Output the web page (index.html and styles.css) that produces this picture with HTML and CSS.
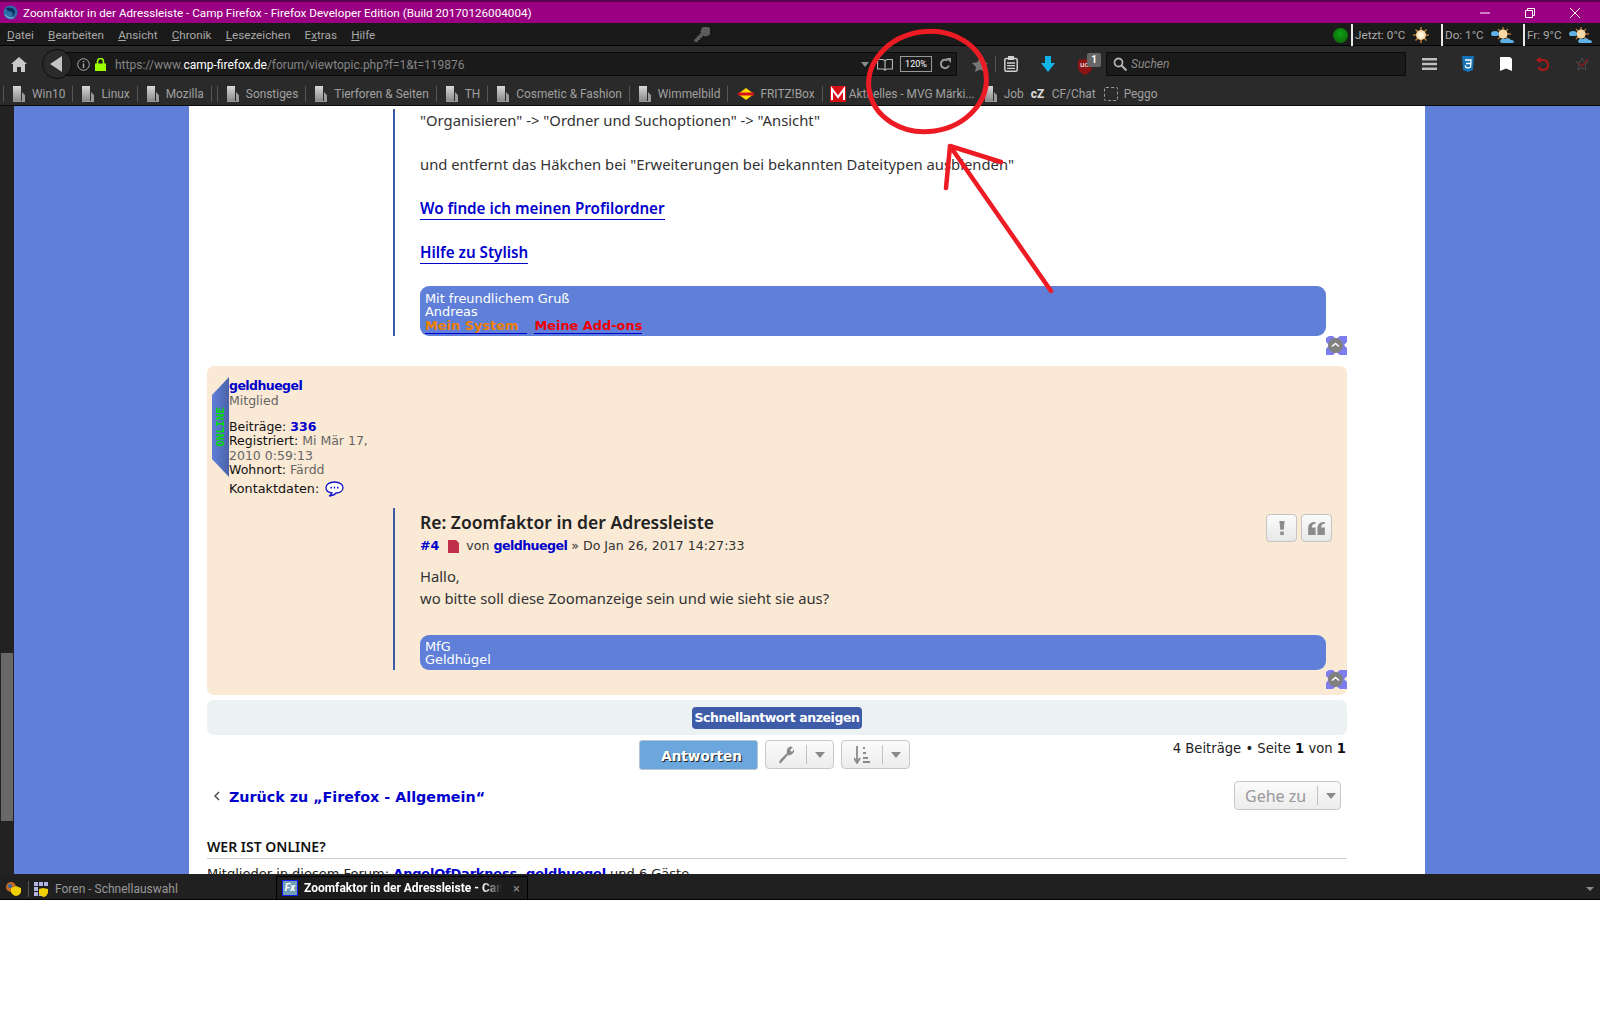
FILE: index.html
```html
<!DOCTYPE html>
<html lang="de">
<head>
<meta charset="utf-8">
<title>Zoomfaktor in der Adressleiste - Camp Firefox</title>
<link rel="stylesheet" href="styles.css">
</head>
<body>
<svg class="sprite" aria-hidden="true">
  <defs>
    <linearGradient id="docg" x1="0" y1="0" x2="0" y2="1"><stop offset="0" stop-color="#d8d8d8"/><stop offset="1" stop-color="#8a8a8a"/></linearGradient>
    <symbol id="doc" viewBox="0 0 12 16"><path d="M0 0H8V15H0Z" fill="url(#docg)"/><path d="M9 6L12 9V16H0V15H9Z" fill="#9a9a9a"/></symbol>
    <symbol id="sun" viewBox="0 0 16 16"><g stroke="#b07a3a" stroke-width="1.6"><path d="M8 0V16M0 8H16M2.5 2.5L13.5 13.5M13.5 2.5L2.5 13.5"/></g><circle cx="8" cy="8" r="5" fill="#f6d9a6"/><circle cx="8" cy="8" r="3" fill="#fff3d8"/></symbol>
    <symbol id="cloudy" viewBox="0 0 23 16"><g stroke="#b07a3a" stroke-width="1.4"><path d="M12 0V14M5 7H20M7 2L17 12M17 2L7 12"/></g><circle cx="12" cy="7" r="4.5" fill="#f6d9a6"/><path d="M0 7Q0 4 4 4T8 7Q8 9 5 9H1Z" fill="#5fb2e6"/><path d="M9 14Q10 11 14 12Q18 10 20 13Q23 13 23 15Q23 16 21 16H11Q9 16 9 14Z" fill="#5fb2e6"/></symbol>
    <symbol id="chain" viewBox="0 0 21 19"><path d="M0 2L3 0H7L10 3L14 0H21V6L18 9L21 12V19H14L10 16L7 19H0V13L3 9L0 6Z" fill="#7d7df0"/><circle cx="9.500" cy="9.500" r="7.500" fill="#808080"/><path d="M6 10.500L9.500 7.500L13 10.500" fill="none" stroke="#fff" stroke-width="1.500"/></symbol>
  </defs>
</svg>
<div class="browser">
  <header class="titlebar">
    <svg class="ti-logo" viewBox="0 0 14 14"><circle cx="7" cy="7" r="6.500" fill="#2b6ea8"/><path d="M3 3Q8 1 11 5Q12 9 8 11Q11 7 7 6Q4 6 3 3Z" fill="#0d2d5a"/><path d="M2 9Q5 13 10 12" stroke="#7fb4d8" fill="none"/></svg>
    <span class="ti-text">Zoomfaktor in der Adressleiste - Camp Firefox - Firefox Developer Edition (Build 20170126004004)</span>
    <span class="win-btns">
      <svg class="win-btn" viewBox="0 0 10 10"><path d="M0 5H10" stroke="#fff" stroke-width="1"/></svg>
      <svg class="win-btn" viewBox="0 0 10 10"><path d="M.5 2.500H7.500V9.500H.5ZM2.500 2.500V.5H9.500V7.500H7.500" fill="none" stroke="#fff"/></svg>
      <svg class="win-btn" viewBox="0 0 10 10"><path d="M0 0L10 10M10 0L0 10" stroke="#fff"/></svg>
    </span>
  </header>
  <nav class="menubar">
    <span class="menu"><u>D</u>atei</span>
    <span class="menu"><u>B</u>earbeiten</span>
    <span class="menu"><u>A</u>nsicht</span>
    <span class="menu"><u>C</u>hronik</span>
    <span class="menu"><u>L</u>esezeichen</span>
    <span class="menu">E<u>x</u>tras</span>
    <span class="menu"><u>H</u>ilfe</span>
    <svg class="key" viewBox="0 0 16 16"><path d="M0 13L7 6A5 5 0 1 1 10 9L8 9V11H6V13H4V15H1Z" fill="#5c5c5c"/></svg>
    <span class="weather">
      <span class="orb"></span>
      <span class="wx wx-a">Jetzt: 0°C<svg class="sun"><use href="#sun"/></svg></span>
      <span class="wx wx-b">Do: 1°C<svg class="cloud"><use href="#cloudy"/></svg></span>
      <span class="wx wx-c">Fr: 9°C<svg class="cloud"><use href="#cloudy"/></svg></span>
    </span>
  </nav>
  <div class="navbar">
    <svg class="home" viewBox="0 0 16 15"><path d="M8 0L16 7H14V15H10V10H6V15H2V7H0Z" fill="#c8c8c8"/></svg>
    <div class="urlbar">
      <span class="back"><svg viewBox="0 0 12 16" class="back-ar"><path d="M12 0V16L0 8Z" fill="#c4c4c4"/></svg></span>
      <svg class="info" viewBox="0 0 13 13"><circle cx="6.500" cy="6.500" r="5.800" fill="none" stroke="#aaa" stroke-width="1"/><path d="M6.500 3V4.300M6.500 5.500V10" stroke="#aaa" stroke-width="1.400"/></svg>
      <svg class="lock" viewBox="0 0 11 13"><path d="M2.500 6V3.500A3 3 0 0 1 8.500 3.500V6" fill="none" stroke="#9cff00" stroke-width="1.600"/><rect y="5.500" width="11" height="7.500" fill="#9cff00"/></svg>
      <span class="url">https://www.<b>camp-firefox.de</b>/forum/viewtopic.php?f=1&amp;t=119876</span>
      <svg class="drop" viewBox="0 0 8 5"><path d="M0 0H8L4 5Z" fill="#8a8a8a"/></svg>
      <svg class="reader" viewBox="0 0 16 13"><path d="M.5 1.500H6L8 2.500L10 1.500H15.500V11H10L8 12L6 11H.5ZM8 2.500V12" fill="none" stroke="#b4b4b4" stroke-width="1.200"/></svg>
      <span class="zoombox">120%</span>
      <svg class="reload" viewBox="0 0 12 12"><path d="M10 7.500A4.200 4.200 0 1 1 8.500 2.500" fill="none" stroke="#9a9a9a" stroke-width="2"/><path d="M7 0H12V5Z" fill="#9a9a9a"/></svg>
    </div>
    <svg class="star" viewBox="0 0 16 15"><path d="M8 0L10.500 5.200L16 6L12 10L13 15L8 12.500L3 15L4 10L0 6L5.500 5.200Z" fill="#787878"/></svg>
    <span class="tb-sep"></span>
    <svg class="clip" viewBox="0 0 14 16"><rect x=".8" y="2.500" width="12.400" height="12.700" rx="1.500" fill="none" stroke="#d0d0d0" stroke-width="1.500"/><rect x="4" y="0" width="6" height="4" fill="#d0d0d0"/><path d="M3 7H11M3 9.700H11M3 12.400H11" stroke="#d0d0d0" stroke-width="1.300"/></svg>
    <svg class="dl" viewBox="0 0 14 16"><path d="M4 0H10V7H14L7 16L0 7H4Z" fill="#12b4e6"/></svg>
    <span class="ub">
      <svg class="ub-ico" viewBox="0 0 14 16"><path d="M0 1L7 0L14 1V9Q13 14 7 16Q1 14 0 9Z" fill="#8c1414"/></svg>
      <span class="ub-txt">uo</span>
      <span class="badge">1</span>
    </span>
    <div class="search">
      <svg class="s-ico" viewBox="0 0 14 14"><circle cx="5.500" cy="5.500" r="4" fill="none" stroke="#b0b0b0" stroke-width="1.800"/><path d="M8.500 8.500L13.500 13.500" stroke="#b0b0b0" stroke-width="2.200"/></svg>
      <span class="s-txt">Suchen</span>
    </div>
    <svg class="burger" viewBox="0 0 15 12"><path d="M0 0H15V2.500H0ZM0 4.700H15V7.200H0ZM0 9.400H15V12H0Z" fill="#c0c0c0"/></svg>
    <svg class="css3" viewBox="0 0 12 16"><path d="M0 0H12L11 14L6 16L1 14Z" fill="#1572b6"/><path d="M3 4H9L8.600 11L6 12L3.500 11V9.300M4 7.500H8.500" fill="none" stroke="#fff" stroke-width="1.300"/></svg>
    <svg class="flag" viewBox="0 0 12 14"><path d="M0 0H10L12 2V14L6 11.500L0 14Z" fill="#fff"/></svg>
    <svg class="undo" viewBox="0 0 14 14"><path d="M4 3H8A5 5 0 1 1 3.500 10" fill="none" stroke="#b01818" stroke-width="2"/><path d="M5.500 0V6.500L1 3Z" fill="#b01818"/></svg>
    <svg class="chk" viewBox="0 0 14 14"><path d="M7 1L8.800 5H13L10 8L11 13L7 10.500L3 13L4 8L1 5H5.200Z" fill="none" stroke="#4a4a4a"/><path d="M4 6L7 9L13 2" fill="none" stroke="#8c1a1a" stroke-width="1.300"/></svg>
  </div>
  <div class="bookmarks">
    <span class="bm-sep"></span><span class="bm"><svg class="bm-doc"><use href="#doc"/></svg>Win10</span>
    <span class="bm-sep"></span><span class="bm"><svg class="bm-doc"><use href="#doc"/></svg>Linux</span>
    <span class="bm-sep"></span><span class="bm"><svg class="bm-doc"><use href="#doc"/></svg>Mozilla</span>
    <span class="bm-sep"></span><span class="bm-sep sep-near"></span><span class="bm"><svg class="bm-doc"><use href="#doc"/></svg>Sonstiges</span>
    <span class="bm-sep"></span><span class="bm"><svg class="bm-doc"><use href="#doc"/></svg>Tierforen &amp; Seiten</span>
    <span class="bm-sep"></span><span class="bm"><svg class="bm-doc"><use href="#doc"/></svg>TH</span>
    <span class="bm-sep"></span><span class="bm"><svg class="bm-doc"><use href="#doc"/></svg>Cosmetic &amp; Fashion</span>
    <span class="bm-sep"></span><span class="bm"><svg class="bm-doc"><use href="#doc"/></svg>Wimmelbild</span>
    <span class="bm-sep"></span>
    <span class="bm bm-fritz"><svg class="fritz" viewBox="0 0 16 12"><path d="M8 0L16 6L8 12L0 6Z" fill="#ffd900"/><path d="M0 4.500H16V7.500H0Z" fill="#d4141a"/></svg>FRITZ!Box</span>
    <span class="bm-sep"></span>
    <span class="bm bm-fav"><svg class="mvg" viewBox="0 0 16 16"><rect width="16" height="16" fill="#d80f16"/><path d="M2 14V3L8 11L14 3V14" fill="none" stroke="#fff" stroke-width="2"/></svg>Aktuelles - MVG Märki...</span>
    <span class="bm bm-job"><svg class="bm-doc"><use href="#doc"/></svg>Job</span>
    <span class="bm bm-cz"><span class="cz">cZ</span>CF/Chat</span>
    <span class="bm bm-peggo"><span class="dashed"></span>Peggo</span>
  </div>
  <main class="page">
    <div class="side"><span class="thumb"></span></div>
    <div class="wrap">
      <article class="post post-plain">
        <div class="body">
          <p class="txt">"Organisieren" -&gt; "Ordner und Suchoptionen" -&gt; "Ansicht"<br><br>und entfernt das Häkchen bei "Erweiterungen bei bekannten Dateitypen ausblenden"<br><br><a class="lnk">Wo finde ich meinen Profilordner</a><br><br><a class="lnk">Hilfe zu Stylish</a></p>
          <div class="sig sig-a">Mit freundlichem Gruß<br>Andreas<br><a class="sl sl-o">Mein System&nbsp;&nbsp;</a> <a class="sl sl-r">Meine Add-ons</a></div>
        </div>
        <div class="chainrow"><svg class="chain"><use href="#chain"/></svg></div>
      </article>
      <article class="post post-bg">
        <div class="profile">
          <span class="ribbon"><span class="online">ONLINE</span></span>
          <div class="pname">geldhuegel</div>
          <div class="prank">Mitglied</div>
          <div class="pdata"><span class="pk">Beiträge:</span> <b class="pb">336</b></div>
          <div class="pdata"><span class="pk">Registriert:</span> Mi Mär 17, 2010 0:59:13</div>
          <div class="pdata"><span class="pk">Wohnort:</span> Färdd</div>
          <div class="pcontact"><span class="pk">Kontaktdaten:</span>
            <svg class="bubble" viewBox="0 0 19 16"><path d="M9.500 1C4.500 1 1 3.500 1 6.700C1 9.500 3.500 11.500 7 12Q6 14 4 15Q9 14.500 11 12C15 11.800 18 9.700 18 6.700C18 3.500 14.500 1 9.500 1Z" fill="#fff" stroke="#1414c8" stroke-width="1.300"/><path d="M5.500 6.700H7M8.800 6.700H10.200M12 6.700H13.500" stroke="#1414c8" stroke-width="1.800"/></svg>
          </div>
        </div>
        <div class="body body-2">
          <div class="phead">
            <div class="pt">
              <h3 class="ptitle">Re: Zoomfaktor in der Adressleiste</h3>
              <div class="pmeta"><b class="pb">#4</b><svg class="pdf" viewBox="0 0 11 13"><path d="M0 0H8L11 3V13H0Z" fill="#c0304a"/></svg>von <b class="pb pb-tight">geldhuegel</b> » Do Jan 26, 2017 14:27:33</div>
            </div>
            <div class="pbtns">
              <span class="pbtn"><svg class="pbi" viewBox="0 0 6 16"><path d="M0 0H6L5 10H1ZM1 12H5V16H1Z" fill="#8c8c8c"/></svg></span>
              <span class="pbtn"><svg class="pbq" viewBox="0 0 18 14"><path d="M8 0V2Q4 2 4 6H8V14H0V6Q0 0 8 0ZM18 0V2Q14 2 14 6H18V14H10V6Q10 0 18 0Z" fill="#8c8c8c"/></svg></span>
            </div>
          </div>
          <p class="txt txt-2">Hallo,<br>wo bitte soll diese Zoomanzeige sein und wie sieht sie aus?</p>
          <div class="sig sig-b">MfG<br>Geldhügel</div>
        </div>
        <div class="chainrow"><svg class="chain"><use href="#chain"/></svg></div>
      </article>
      <div class="quickbar"><span class="quickbtn">Schnellantwort anzeigen</span></div>
      <div class="actions">
        <span class="reply">Antworten</span>
        <span class="tool"><svg class="tic" viewBox="0 0 16 18"><path d="M1 17L2 14L9 7Q8 3 11 1Q13 0 15 1L12 4L14 6L16 3Q17 6 14 8Q12 10 10 9L3 17Z" fill="#8a8a8a"/></svg><i class="tsep"></i><svg class="tar" viewBox="0 0 10 6"><path d="M0 0H10L5 6Z" fill="#8a8a8a"/></svg></span>
        <span class="tool"><svg class="tic" viewBox="0 0 16 18"><path d="M3 0V15M0 12L3 17L6 12" stroke="#8a8a8a" stroke-width="1.800" fill="none"/><path d="M9 1H11V3H9ZM9 6H12V8H9ZM9 11H14V13H9ZM9 15H16V17H9Z" fill="#8a8a8a"/></svg><i class="tsep"></i><svg class="tar" viewBox="0 0 10 6"><path d="M0 0H10L5 6Z" fill="#8a8a8a"/></svg></span>
        <span class="pagin">4 Beiträge • Seite <b>1</b> von <b>1</b></span>
      </div>
      <div class="backrow">
        <svg class="chev" viewBox="0 0 6 10"><path d="M5 1L1 5L5 9" fill="none" stroke="#444" stroke-width="1.400"/></svg>
        <a class="backlink">Zurück zu „Firefox - Allgemein“</a>
        <span class="goto">Gehe zu<i class="tsep gsep"></i><svg class="tar" viewBox="0 0 10 6"><path d="M0 0H10L5 6Z" fill="#8a8a8a"/></svg></span>
      </div>
      <h3 class="who">WER IST ONLINE?</h3>
      <p class="members">Mitglieder in diesem Forum: <b class="pb pb-mem">AngelOfDarkness, geldhuegel</b> und 6 Gäste</p>
    </div>
  </main>
  <footer class="tabbar">
    <svg class="tray" viewBox="0 0 15 14"><circle cx="5" cy="5" r="5" fill="#c46a20"/><circle cx="4" cy="4" r="2" fill="#2b6ea8"/><path d="M10 4L15 6V10Q14 13 10 14Q6 13 5 10V6Z" fill="#f0d000"/></svg>
    <span class="ts"></span>
    <svg class="grid-ic" viewBox="0 0 15 15"><path d="M0 0H4V4H0ZM5 0H9V4H5ZM10 0H14V4H10ZM0 5H4V9H0ZM0 10H4V14H0ZM5 10H9V14H5Z" fill="#b4b4e0"/><path d="M9 6L14 7V11Q13 14 10 15Q6 14 5 11V7Z" fill="#f0d000"/></svg>
    <span class="tab-a">Foren - Schnellauswahl</span>
    <span class="tab-b"><span class="fx">Fx</span><span class="tab-title">Zoomfaktor in der Adressleiste - Camp Firefox</span><span class="tab-x">×</span></span>
    <svg class="tlist" viewBox="0 0 8 4"><path d="M0 0H8L4 4Z" fill="#8a8a8a"/></svg>
  </footer>
  <svg class="marks" viewBox="0 0 1600 900">
    <ellipse cx="927.500" cy="81.500" rx="59" ry="50" fill="none" stroke="#ed1c24" stroke-width="5" transform="rotate(-8 927.500 81.500)"/>
    <path d="M1051 291L950 146M946 188L950 146L1001 162" fill="none" stroke="#ed1c24" stroke-width="4.500" stroke-linecap="round" stroke-linejoin="round"/>
  </svg>
</div>
</body>
</html>
```
FILE: styles.css
```css
* { box-sizing: border-box; }
html, body { margin: 0; padding: 0; background: #fff; }
body { font-family: Roboto, "Noto Sans", sans-serif; height: 1024px; overflow: hidden; }
svg { display: block; flex: none; }
.sprite { position: absolute; width: 0; height: 0; }
.browser { position: relative; width: 1600px; height: 900px; display: flex; flex-direction: column; overflow: hidden; }
.marks { position: absolute; left: 0; top: 0; width: 1600px; height: 900px; pointer-events: none; }

/* title bar */
.titlebar { height: 23px; background: #9b0082; border-top: 2px solid #5c0050; display: flex; align-items: center; color: #fff; padding-left: 3px; flex: none; }
.ti-logo { width: 15px; height: 15px; }
.ti-text { margin-left: 5px; font-size: 11.700px; white-space: nowrap; }
.win-btns { margin-left: auto; display: flex; align-items: center; gap: 35px; padding-right: 20px; }
.win-btn { width: 10px; height: 10px; }

/* menu */
.menubar { height: 23px; background: #1a1a1a; border-bottom: 1px solid #000; display: flex; align-items: center; color: #a8a8a8; font-size: 11.700px; padding: 2px 0 0 7px; flex: none; }
.menu { margin-right: 14.200px; white-space: nowrap; }
.key { width: 16px; height: 16px; margin-left: 304px; }
.weather { margin-left: auto; display: flex; align-items: center; height: 22px; }
.orb { width: 15px; height: 15px; border-radius: 50%; background: radial-gradient(circle at 50% 40%, #12a012, #0a5a0a); margin-right: 3px; }
.wx { display: flex; align-items: center; height: 22px; border-left: 2px solid #e8e8e8; padding-left: 2px; white-space: nowrap; font-size: 11.700px; }
.wx-a { width: 90px; }
.wx-b { width: 82px; }
.wx-c { width: 77px; }
.sun { width: 16px; height: 16px; margin-left: 8px; }
.cloud { width: 23px; height: 16px; margin-left: 7px; }

/* nav */
.navbar { height: 34px; background: #2a2a2a; display: flex; align-items: center; flex: none; position: relative; padding-top: 2px; }
.home { width: 16px; height: 15px; margin-left: 11px; }
.urlbar { height: 24px; width: 897px; margin-left: 33px; background: #1a1a1a; border: 1px solid #0c0c0c; display: flex; align-items: center; position: relative; color: #858585; font-size: 12px; }
.back { position: absolute; left: -19px; top: -4px; width: 30px; height: 30px; border-radius: 50%; border: 1px solid #0c0c0c; background: #2a2a2a; display: flex; align-items: center; justify-content: center; }
.back-ar { width: 12px; height: 16px; margin-right: 2px; }
.info { width: 13px; height: 13px; margin-left: 16px; }
.lock { width: 11px; height: 13px; margin-left: 5px; }
.url { margin-left: 9px; white-space: nowrap; padding-top: 2px; }
.url b { color: #fff; font-weight: 400; }
.drop { width: 8px; height: 5px; margin-left: auto; }
.reader { width: 16px; height: 13px; margin-left: 8px; }
.zoombox { width: 32px; height: 16px; border: 1px solid #999; color: #fff; font-size: 9px; line-height: 14px; text-align: center; margin-left: 7px; }
.reload { width: 12px; height: 12px; margin-left: 7px; margin-right: 5px; }
.star { width: 16px; height: 15px; margin-left: 15px; }
.tb-sep { width: 1px; height: 16px; background: #555; margin-left: 7px; }
.clip { width: 14px; height: 16px; margin-left: 8px; }
.dl { width: 14px; height: 16px; margin-left: 23px; }
.ub { width: 23px; height: 20px; margin-left: 23px; position: relative; }
.ub-ico { width: 14px; height: 16px; margin-top: 5px; }
.ub-txt { position: absolute; left: 2px; top: 6px; color: #fff; font-size: 8px; line-height: 10px; }
.badge { position: absolute; left: 9px; top: -1px; width: 14px; height: 14px; background: #666; border-radius: 2px; color: #fff; font-size: 10px; font-weight: 700; line-height: 14px; text-align: center; }
.search { width: 300px; height: 24px; margin-left: 5px; background: #1a1a1a; border: 1px solid #0c0c0c; display: flex; align-items: center; padding-left: 6px; }
.s-ico { width: 14px; height: 14px; }
.s-txt { margin-left: 4px; font-size: 12px; font-style: italic; color: #8a8a8a; }
.burger { width: 15px; height: 12px; margin-left: 16px; }
.css3 { width: 12px; height: 16px; margin-left: 25px; }
.flag { width: 12px; height: 14px; margin-left: 26px; }
.undo { width: 14px; height: 14px; margin-left: 23px; }
.chk { width: 14px; height: 14px; margin-left: 26px; }

/* bookmarks */
.bookmarks { height: 26px; background: #2a2a2a; border-bottom: 1px solid #0a0a0a; display: flex; align-items: center; padding: 2px 0 0 3px; color: #a0a0a0; font-size: 11.900px; flex: none; }
.bm { display: flex; align-items: center; white-space: nowrap; margin-left: 9px; margin-right: 7px; }
.bm-doc { width: 12px; height: 16px; margin-right: 7px; }
.bm-sep { width: 1px; height: 16px; background: #555; }
.sep-near { margin-left: 5px; }
.fritz { width: 16px; height: 12px; margin-right: 6px; }
.mvg { width: 16px; height: 16px; margin-right: 3px; }
.bm-fav { margin-left: 7px; }
.bm-fritz { margin-left: 10px; }
.bm-job { margin-left: 3px; margin-right: 0; }
.bm-cz { margin-left: 7px; margin-right: 0; }
.cz { font-weight: 800; color: #d8d8d8; font-size: 12px; width: 21px; }
.bm-peggo { margin-left: 8px; margin-right: 0; }
.dashed { width: 14px; height: 14px; border: 1px dashed #999; border-radius: 2px; margin-right: 6px; }

/* page */
.page { height: 768px; background: #5f7fd8; display: flex; overflow: hidden; flex: none; }
.side { width: 14px; background: #222; padding-top: 547px; flex: none; }
.thumb { display: block; width: 12px; height: 168px; background: #686868; margin-left: 1px; }
.wrap { width: 1236px; margin-left: 175px; background: #fff; padding: 0 78px 0 18px; flex: none; font-family: "DejaVu Sans", sans-serif; color: #333; }
.post { position: relative; }
.post-plain { padding: 3px 0 11px; }
.post-bg { background: #f9e9d5; border-radius: 7px; padding: 12px 0 6px; }
.body { margin-left: 186px; margin-right: 21px; border-left: 2px solid #3c5aa8; padding-left: 25px; }
.txt { margin: 0; font-family: "Noto Sans", sans-serif; font-size: 14.800px; line-height: 22px; color: #333; }
.lnk { color: #0000cc; font-weight: 600; border-bottom: 1px solid #0000cc; font-size: 15.200px; padding-bottom: 1px; }
.sig { background: #5f7fd8; border-radius: 9px; color: #fff; font-size: 12.900px; line-height: 13.400px; padding: 6px 5px 3px; }
.sig-a { margin-top: 23px; height: 50px; }
.sig-b { margin-top: 26px; height: 35px; padding-top: 5px; }
.sl { font-weight: 700; border-bottom: 1px solid #0000cc; }
.sl-o { color: #f08000; }
.sl-r { color: #f00000; margin-left: 3px; }
.chainrow { display: flex; justify-content: flex-end; }
.chain { width: 21px; height: 19px; }

/* profile */
.profile { margin-left: 22px; width: 145px; position: relative; font-size: 12.500px; color: #666; line-height: 14.300px; height: 130px; }
.ribbon { position: absolute; left: -17px; top: -1px; width: 17px; height: 100px; background: linear-gradient(90deg, #5f7fd8, #4a62a8); clip-path: polygon(100% 0, 0 18%, 0 82%, 100% 100%); display: flex; align-items: center; justify-content: center; }
.online { writing-mode: vertical-rl; transform: rotate(180deg); color: #00e000; font-family: "DejaVu Sans Mono", monospace; font-size: 11px; font-weight: 700; line-height: 12px; }
.pname { color: #0000cc; font-weight: 700; line-height: 15px; letter-spacing: -.55px; font-size: 12.500px; }
.prank { line-height: 15px; margin-bottom: 12px; }
.pk { color: #111; }
.pb { color: #0000cc; font-weight: 700; }
.pb-tight { letter-spacing: -.55px; }
.pb-mem { letter-spacing: -.2px; }
.pcontact { display: flex; align-items: center; gap: 6px; margin-top: 3px; line-height: 17px; font-size: 12.800px; }
.bubble { width: 19px; height: 16px; }

/* post body */
.phead { display: flex; justify-content: space-between; margin-right: -6px; height: 57px; }
.ptitle { margin: 3px 0 0; font-family: "Noto Sans", sans-serif; font-size: 17.500px; line-height: 22px; color: #222; font-weight: 600; }
.pmeta { display: flex; align-items: center; font-size: 12.600px; line-height: 18px; color: #333; margin-top: 4px; white-space: pre; }
.pdf { width: 11px; height: 13px; margin: 0 7px 0 9px; }
.pbtns { display: flex; gap: 4px; margin-top: 6px; }
.pbtn { width: 31px; height: 28px; border: 1px solid #c4c4c4; border-radius: 4px; background: linear-gradient(#fbfbfb, #e8e8e8); display: flex; align-items: center; justify-content: center; }
.pbi { width: 6px; height: 14px; }
.pbq { width: 17px; height: 13px; }

.quickbar { margin-top: 5px; height: 35px; background: #ecf1f3; border-radius: 7px; display: flex; align-items: center; justify-content: center; }
.quickbtn { width: 170px; height: 22px; background: #3f5ca8; border-radius: 4px; color: #fff; font-size: 12.500px; letter-spacing: -.43px; font-weight: 700; line-height: 22px; text-align: center; white-space: nowrap; }

.actions { margin-top: 5px; display: flex; align-items: flex-start; padding-left: 432px; height: 30px; }
.reply { width: 119px; height: 30px; background: #6ba6dc; border: 1px solid #b8c4d0; border-radius: 3px; color: #fff; font-size: 13.600px; font-weight: 700; text-align: center; line-height: 30px; padding-left: 6px; text-shadow: 1px 1px 0 #222; }
.tool { height: 29px; width: 69px; margin-left: 7px; border: 1px solid #c8c8c8; border-radius: 4px; background: linear-gradient(#fbfbfb, #ececec); display: flex; align-items: center; padding-left: 12px; }
.tic { width: 16px; height: 18px; }
.tsep { display: block; width: 1px; height: 19px; background: #c0c0c0; margin-left: 12px; }
.tar { width: 10px; height: 6px; margin-left: 8px; }
.pagin { margin-left: auto; color: #222; font-size: 13.200px; line-height: 18px; white-space: nowrap; padding-right: 1px; }
.pagin b { color: #111; }

.backrow { margin-top: 11px; height: 29px; display: flex; align-items: center; }
.chev { width: 6px; height: 10px; margin-left: 7px; }
.backlink { color: #0000cc; font-family: "DejaVu Sans", sans-serif; font-weight: 700; font-size: 14.300px; margin-left: 9px; padding-top: 2px; white-space: nowrap; }
.goto { margin-left: auto; margin-right: 6px; width: 107px; height: 29px; border: 1px solid #c8c8c8; border-radius: 4px; background: linear-gradient(#fbfbfb, #ececec); color: #999; font-family: "Noto Sans", sans-serif; font-size: 16px; display: flex; align-items: center; padding-left: 10px; }
.gsep { margin-left: 11px; }

.who { margin: 27px 0 0; font-family: "Noto Sans", sans-serif; font-size: 14px; line-height: 20px; font-weight: 600; color: #111; border-bottom: 1px solid #ccc; padding-bottom: 1px; }
.members { margin: 6px 0 0; font-size: 13px; line-height: 18px; color: #222; }

/* tab bar */
.tabbar { height: 26px; background: #202020; border-bottom: 1px solid #000; display: flex; align-items: center; color: #999; font-size: 12px; padding: 5px 0 0 6px; flex: none; position: relative; }
.tray { width: 15px; height: 14px; }
.ts { width: 1px; height: 16px; background: #555; margin-left: 7px; }
.grid-ic { width: 15px; height: 15px; margin-left: 5px; }
.tab-a { margin-left: 6px; width: 221px; white-space: nowrap; }
.tab-b { width: 252px; height: 23px; align-self: flex-end; border: 1px solid #000; border-bottom: 0; background: #1c1c1c; display: flex; align-items: center; color: #fff; padding-left: 5px; }
.fx { width: 16px; height: 16px; background: #6fa0b8; border: 1px solid #1a1af0; color: #fff; font-size: 10px; font-style: italic; font-weight: 700; line-height: 14px; text-align: center; flex: none; }
.tab-title { margin-left: 6px; width: 198px; overflow: hidden; white-space: nowrap; font-weight: 700; -webkit-mask-image: linear-gradient(90deg, #000 90%, transparent); mask-image: linear-gradient(90deg, #000 90%, transparent); }
.tab-x { margin-left: 11px; color: #8a8a8a; font-size: 13px; }
.tlist { width: 8px; height: 4px; margin-left: auto; margin-right: 6px; }
```
